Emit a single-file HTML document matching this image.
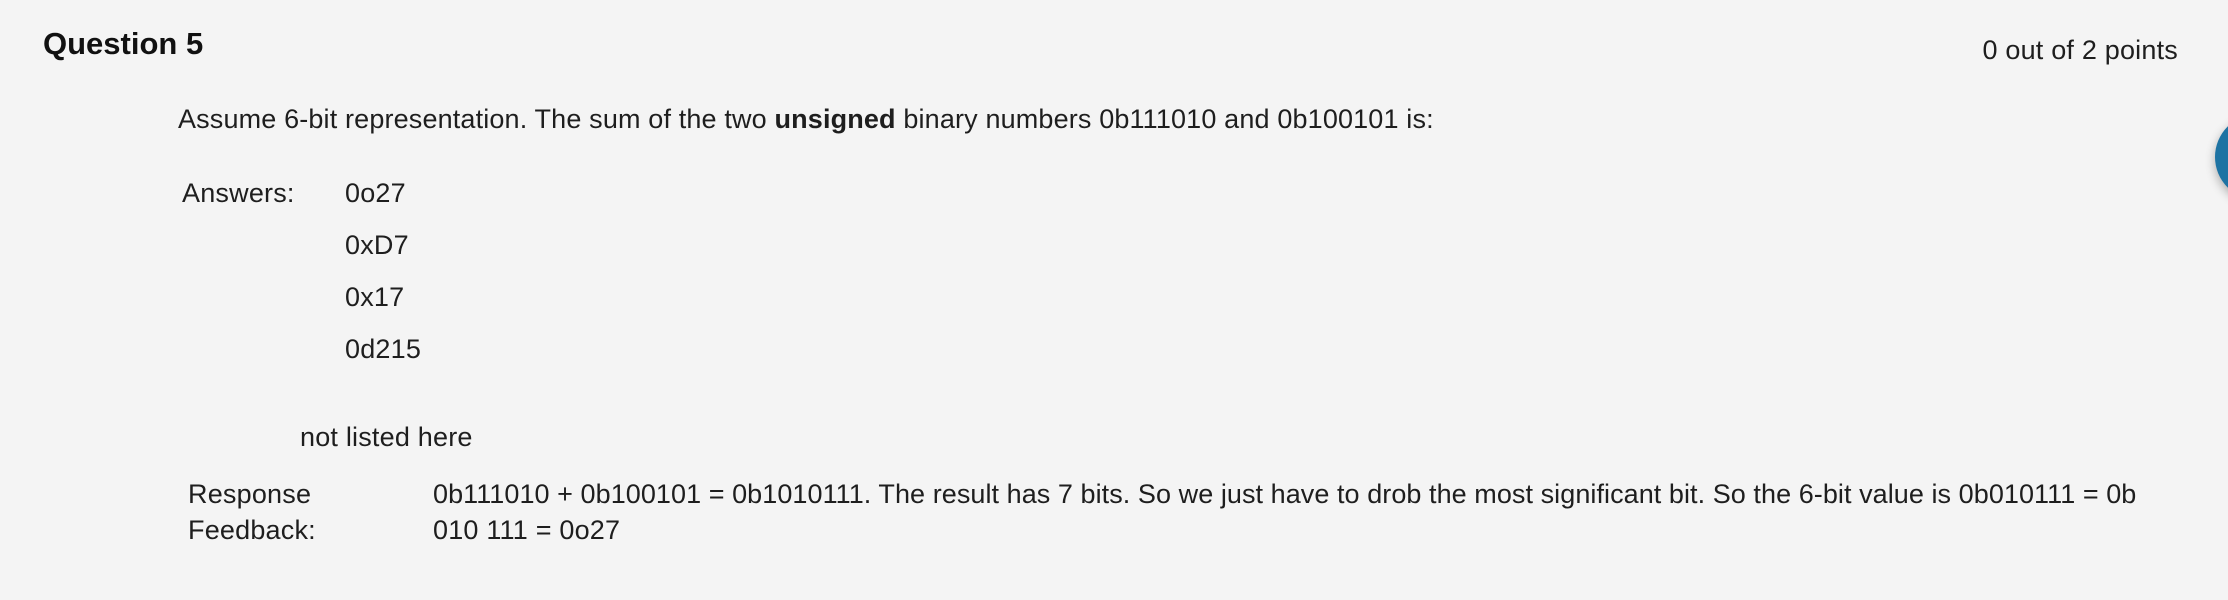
<!DOCTYPE html>
<html><head><meta charset="utf-8"><style>
html,body{margin:0;padding:0}
body{width:2228px;height:600px;background:#f4f4f4;position:relative;overflow:hidden;font-family:"Liberation Sans",sans-serif;color:#1e1e1e}
.t{position:absolute;white-space:nowrap;line-height:1;font-size:27px;letter-spacing:0.2px}
</style></head><body>
<div class="t" style="left:43px;top:28px;font-size:31px;font-weight:bold;color:#111;letter-spacing:0">Question 5</div>
<div class="t" style="right:50px;top:37px">0 out of 2 points</div>
<div class="t" style="left:178px;top:106px;letter-spacing:0.15px">Assume 6-bit representation. The sum of the two <b>unsigned</b> binary numbers 0b111010 and 0b100101 is:</div>
<div class="t" style="left:182px;top:180px">Answers:</div>
<div class="t" style="left:345px;top:180px">0o27</div>
<div class="t" style="left:345px;top:232px">0xD7</div>
<div class="t" style="left:345px;top:284px">0x17</div>
<div class="t" style="left:345px;top:336px">0d215</div>
<div class="t" style="left:300px;top:424px">not listed here</div>
<div class="t" style="left:188px;top:481px">Response</div>
<div class="t" style="left:188px;top:517px">Feedback:</div>
<div class="t" style="left:433px;top:481px;letter-spacing:0.06px">0b111010 + 0b100101 = 0b1010111. The result has 7 bits. So we just have to drob the most significant bit. So the 6-bit value is 0b010111 = 0b</div>
<div class="t" style="left:433px;top:517px">010 111 = 0o27</div>
<div style="position:absolute;left:2215px;top:114px;width:86px;height:86px;border-radius:50%;background:#1d73a3;box-shadow:0 4px 10px rgba(0,0,0,0.3)"></div>
</body></html>
